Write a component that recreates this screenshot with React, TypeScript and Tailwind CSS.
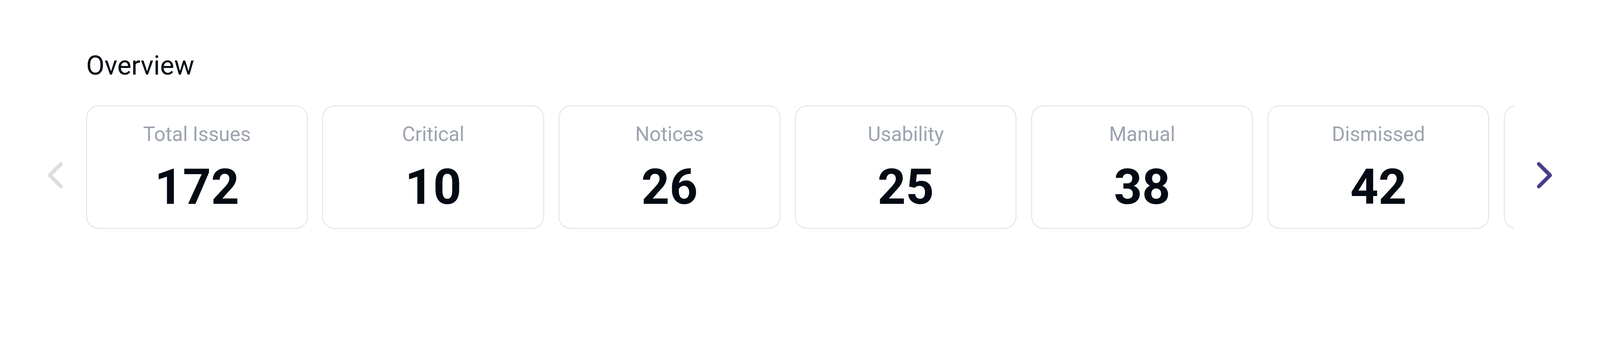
import React, { useEffect, useState } from "react";
import { ChevronLeft, ChevronRight } from "lucide-react";

const DESIGN_WIDTH = 1560;

const stats = [
  { label: "Total Issues", value: 172 },
  { label: "Critical", value: 10 },
  { label: "Notices", value: 26 },
  { label: "Usability", value: 25 },
  { label: "Manual", value: 38 },
  { label: "Dismissed", value: 42 },
];

function useViewportScale() {
  const [scale, setScale] = useState(() =>
    typeof window !== "undefined" ? window.innerWidth / DESIGN_WIDTH : 1
  );
  useEffect(() => {
    const onResize = () => setScale(window.innerWidth / DESIGN_WIDTH);
    window.addEventListener("resize", onResize);
    return () => window.removeEventListener("resize", onResize);
  }, []);
  return scale;
}

function StatCard({ label, value }: { label?: string; value?: number }) {
  return (
    <div className="w-[216px] h-[120px] shrink-0 rounded-xl border border-[#e0e0e0] bg-white flex flex-col items-center pt-[17.5px]">
      {label !== undefined && (
        <>
          <div className="text-[19.5px] leading-none text-[#9ca3af] whitespace-nowrap">
            {label}
          </div>
          <div className="mt-[17.5px] text-5xl leading-none font-bold text-[#030a14]">
            {value}
          </div>
        </>
      )}
    </div>
  );
}

export default function App() {
  const scale = useViewportScale();
  return (
    <div className="bg-white w-full">
      <div
        className="w-[1560px] h-[271px] bg-white"
        style={{ zoom: scale, fontFamily: "Roboto, 'Noto Sans', sans-serif" }}
      >
        <div className="px-8 pt-[51px]">
          <h2 className="ml-[52px] text-[26px] leading-[26px] font-normal text-[#030a14]">
            Overview
          </h2>
          <div className="mt-[26px] flex items-center gap-2">
            <button
              type="button"
              aria-label="Previous"
              className="w-11 h-11 shrink-0 flex items-center justify-center"
            >
              <ChevronLeft size={44} strokeWidth={2} color="#dedede" />
            </button>
            <div className="flex-1 min-w-0 overflow-hidden pb-4">
              <div className="flex gap-[14.4px]">
                {stats.map((s) => (
                  <StatCard key={s.label} label={s.label} value={s.value} />
                ))}
                <StatCard />
              </div>
            </div>
            <button
              type="button"
              aria-label="Next"
              className="w-11 h-11 shrink-0 flex items-center justify-center"
            >
              <ChevronRight size={44} strokeWidth={2} color="#463f8a" />
            </button>
          </div>
        </div>
      </div>
    </div>
  );
}
